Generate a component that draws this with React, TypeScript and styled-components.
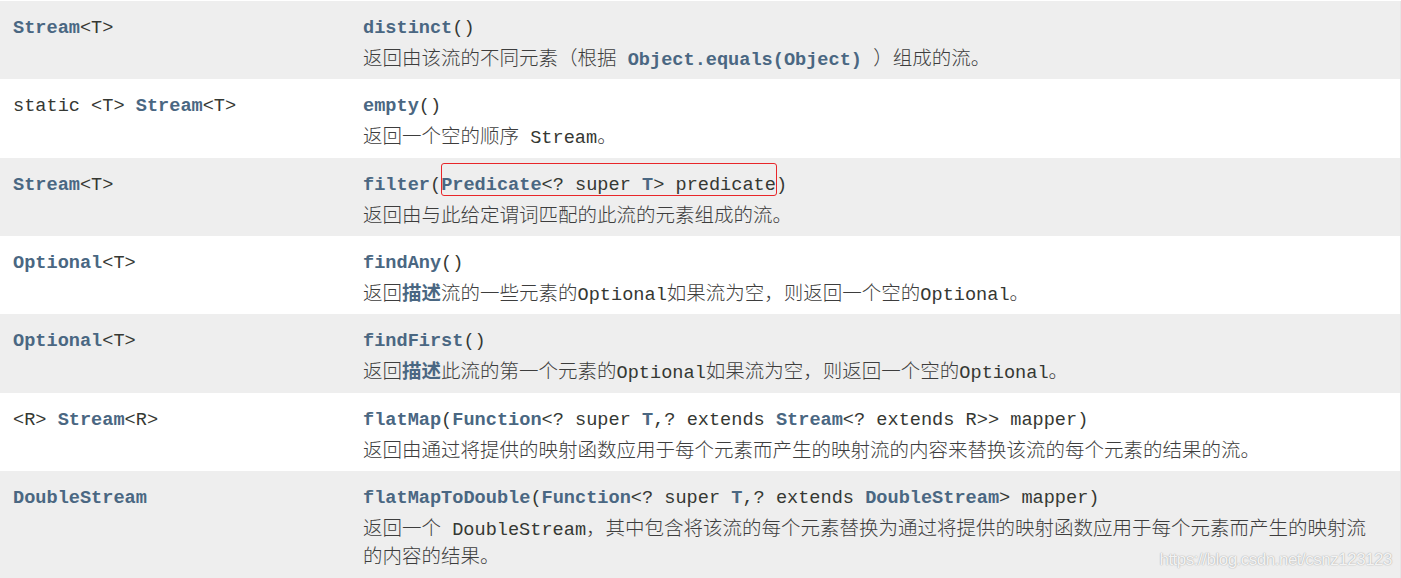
import React from 'react'
import styled, { createGlobalStyle } from 'styled-components'

const GlobalStyle = createGlobalStyle`
  html, body {
    margin: 0;
    padding: 0;
    background: #fff;
  }
  body {
    font-family: "Liberation Mono", "Noto Sans CJK SC", monospace;
    overflow: hidden;
  }
`

const Page = styled.div`
  position: relative;
  height: 578px;
  padding-top: 1px;
  box-sizing: border-box;
  display: flex;
  flex-direction: column;
`

const Table = styled.div`
  width: 1400px;
  flex: 1;
  display: flex;
  flex-direction: column;
  border-right: 1px solid #e6e6e6;
`

const Row = styled.div<{ $alt?: boolean }>`
  display: grid;
  grid-template-columns: 350px 1fr;
  padding: 14px 0 8.33px 0;
  background: ${p => (p.$alt ? '#eeeeee' : '#ffffff')};
  &:last-child {
    flex: 1;
  }
`

const TypeCell = styled.div`
  padding-left: 13px;
  font-family: "Liberation Mono", monospace;
  font-size: 18.6px;
  line-height: 28px;
  height: 28px;
  color: #353833;
  white-space: nowrap;
`

const MethodCell = styled.div`
  padding: 0 25px 0 13px;
  display: flex;
  flex-direction: column;
`

const Signature = styled.div`
  font-family: "Liberation Mono", monospace;
  font-size: 18.6px;
  line-height: 28px;
  height: 28px;
  color: #353833;
  white-space: nowrap;
`

const Desc = styled.div`
  font-family: "Noto Sans CJK SC", "Liberation Sans", sans-serif;
  font-weight: 300;
  font-size: 19.5px;
  line-height: 28px;
  color: #3d3d3d;
`

// bold link-coloured code (type names, method names)
const B = styled.span`
  font-family: "Liberation Mono", monospace;
  font-weight: 700;
  color: #4a6782;
`

const Mono = styled.span<{ $bold?: boolean }>`
  font-family: "Liberation Mono", monospace;
  font-size: 18.6px;
  line-height: 1;
  font-weight: ${p => (p.$bold ? 700 : 400)};
  color: ${p => (p.$bold ? '#4a6782' : '#353833')};
`

const Strong = styled.span`
  font-weight: 700;
  line-height: 1;
  color: #4a6782;
`

// red annotation box drawn over the parameter
const Mark = styled.span`
  position: relative;
  &::after {
    content: '';
    position: absolute;
    left: 0;
    right: -1px;
    top: -12px;
    bottom: 0;
    border: 1px solid #e8262a;
    border-radius: 3px;
    pointer-events: none;
  }
`

const Watermark = styled.div`
  position: absolute;
  right: 9px;
  bottom: 8px;
  font-family: "Liberation Sans", Arial, sans-serif;
  font-size: 17px;
  letter-spacing: -0.5px;
  line-height: 20px;
  color: rgba(255, 255, 255, 0.9);
  text-shadow: 0 0 1px rgba(0, 0, 0, 0.3), 0 0 2px rgba(0, 0, 0, 0.15);
`

export default function App() {
  return (
    <Page>
      <GlobalStyle />
      <Table>
        <Row $alt>
          <TypeCell><B>Stream</B>&lt;T&gt;</TypeCell>
          <MethodCell>
            <Signature><B>distinct</B>()</Signature>
            <Desc>
              返回由该流的不同元素（根据<Mono> </Mono><Mono $bold>Object.equals(Object)</Mono><Mono> </Mono>）组成的流。
            </Desc>
          </MethodCell>
        </Row>
        <Row>
          <TypeCell>static &lt;T&gt; <B>Stream</B>&lt;T&gt;</TypeCell>
          <MethodCell>
            <Signature><B>empty</B>()</Signature>
            <Desc>返回一个空的顺序<Mono> Stream</Mono>。</Desc>
          </MethodCell>
        </Row>
        <Row $alt>
          <TypeCell><B>Stream</B>&lt;T&gt;</TypeCell>
          <MethodCell>
            <Signature>
              <B>filter</B>(<Mark><B>Predicate</B>&lt;? super <B>T</B>&gt; predicate</Mark>)
            </Signature>
            <Desc>返回由与此给定谓词匹配的此流的元素组成的流。</Desc>
          </MethodCell>
        </Row>
        <Row>
          <TypeCell><B>Optional</B>&lt;T&gt;</TypeCell>
          <MethodCell>
            <Signature><B>findAny</B>()</Signature>
            <Desc>
              返回<Strong>描述</Strong>流的一些元素的<Mono>Optional</Mono>如果流为空，则返回一个空的<Mono>Optional</Mono>。
            </Desc>
          </MethodCell>
        </Row>
        <Row $alt>
          <TypeCell><B>Optional</B>&lt;T&gt;</TypeCell>
          <MethodCell>
            <Signature><B>findFirst</B>()</Signature>
            <Desc>
              返回<Strong>描述</Strong>此流的第一个元素的<Mono>Optional</Mono>如果流为空，则返回一个空的<Mono>Optional</Mono>。
            </Desc>
          </MethodCell>
        </Row>
        <Row>
          <TypeCell>&lt;R&gt; <B>Stream</B>&lt;R&gt;</TypeCell>
          <MethodCell>
            <Signature>
              <B>flatMap</B>(<B>Function</B>&lt;? super <B>T</B>,? extends <B>Stream</B>&lt;? extends R&gt;&gt; mapper)
            </Signature>
            <Desc>返回由通过将提供的映射函数应用于每个元素而产生的映射流的内容来替换该流的每个元素的结果的流。</Desc>
          </MethodCell>
        </Row>
        <Row $alt>
          <TypeCell><B>DoubleStream</B></TypeCell>
          <MethodCell>
            <Signature>
              <B>flatMapToDouble</B>(<B>Function</B>&lt;? super <B>T</B>,? extends <B>DoubleStream</B>&gt; mapper)
            </Signature>
            <Desc>
              返回一个<Mono> DoubleStream</Mono>，其中包含将该流的每个元素替换为通过将提供的映射函数应用于每个元素而产生的映射流的内容的结果。
            </Desc>
          </MethodCell>
        </Row>
      </Table>
      <Watermark>https://blog.csdn.net/csnz123123</Watermark>
    </Page>
  )
}
